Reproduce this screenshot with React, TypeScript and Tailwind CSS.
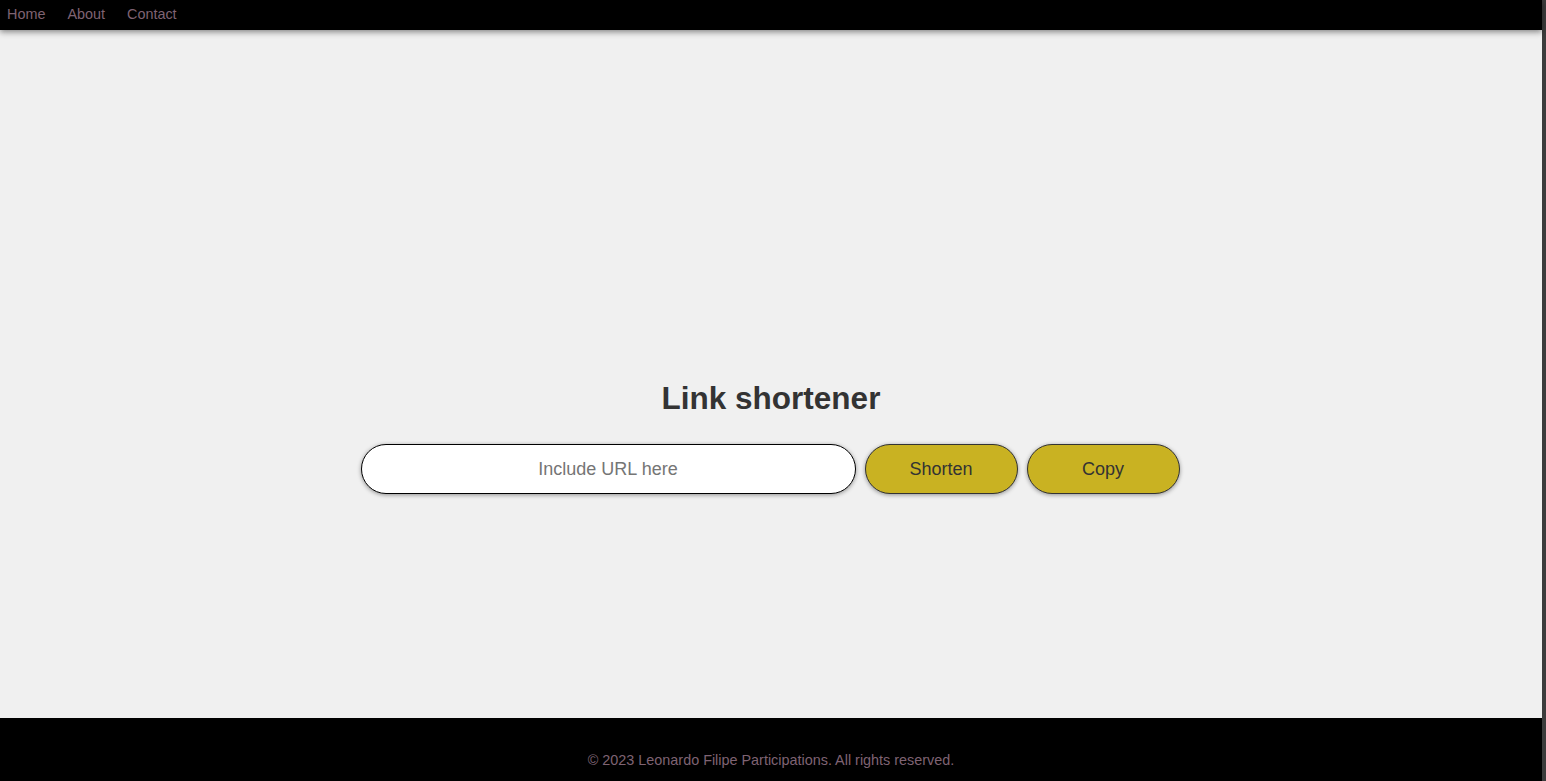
export default function App() {
  return (
    <div className="flex h-screen w-full overflow-hidden font-['Liberation_Sans',Arial,sans-serif]">
      <div className="flex h-full flex-1 flex-col bg-[#f0f0f0]">
        {/* Navbar */}
        <nav className="relative z-10 flex h-[30px] shrink-0 items-center gap-[22px] bg-black pb-[1px] pl-[7px] shadow-[0_2px_6px_rgba(0,0,0,0.45)]">
          <a href="#" className="text-[14.4px] text-[#7f6373]">Home</a>
          <a href="#" className="text-[14.4px] text-[#7f6373]">About</a>
          <a href="#" className="text-[14.4px] text-[#7f6373]">Contact</a>
        </nav>

        {/* Main */}
        <main className="flex flex-1 flex-col items-center pt-[350px]">
          <h1 className="text-[31.5px] font-bold leading-[37px] text-[#333333]">Link shortener</h1>
          <form className="mt-[27px] flex items-center gap-[9px] pr-[2px]" onSubmit={(e) => e.preventDefault()}>
            <input
              type="text"
              placeholder="Include URL here"
              className="h-[50px] w-[495px] rounded-full border-[1.5px] border-black bg-white px-5 text-center text-[18px] text-[#333] shadow-[0_1px_4px_rgba(0,0,0,0.4)] outline-none placeholder:text-[#757575]"
            />
            <button
              type="submit"
              className="h-[50px] w-[153px] rounded-full border-[1.5px] border-[#333333] bg-[#c9b222] text-[18px] text-[#333333] shadow-[0_1px_4px_rgba(0,0,0,0.4)]"
            >
              Shorten
            </button>
            <button
              type="button"
              className="h-[50px] w-[153px] rounded-full border-[1.5px] border-[#333333] bg-[#c9b222] text-[18px] text-[#333333] shadow-[0_1px_4px_rgba(0,0,0,0.4)]"
            >
              Copy
            </button>
          </form>
        </main>

        {/* Footer */}
        <footer className="h-[63px] shrink-0 bg-black pt-[34px] text-center">
          <p className="text-[14.4px] leading-[16px] text-[#7f6373]">© 2023 Leonardo Filipe Participations. All rights reserved.</p>
        </footer>
      </div>
      <div className="h-full w-[4px] shrink-0 bg-[#3c3c3c]" />
    </div>
  );
}
